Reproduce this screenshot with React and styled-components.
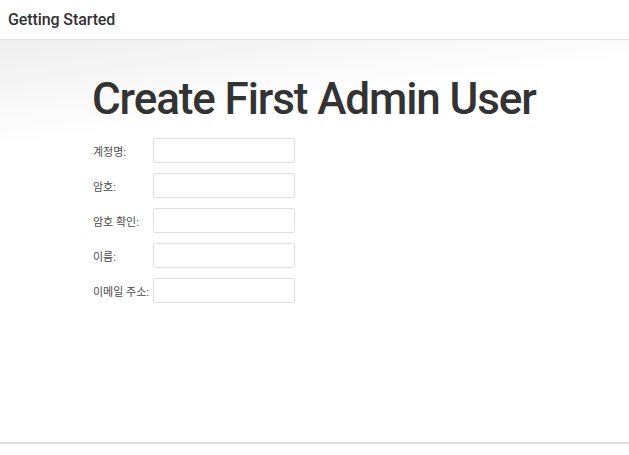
import React from 'react'
import styled, { createGlobalStyle } from 'styled-components'

const Global = createGlobalStyle`
  html, body { margin: 0; padding: 0; background: #fff; }
  body { font-family: Roboto, "Noto Sans CJK KR", sans-serif; color: #333; }
`

const Page = styled.div`
  width: 629px;
  height: 455px;
  display: flex;
  flex-direction: column;
  overflow: hidden;
`

const Header = styled.div`
  height: 40px;
  border-bottom: 1px solid #e4e4e4;
  display: flex;
  align-items: center;
  padding: 0 8px;
  box-sizing: border-box;
  font-size: 16px;
  font-weight: 500;
  letter-spacing: -0.1px;
  color: #333;
`

const Main = styled.div`
  height: 404px;
  box-sizing: border-box;
  border-bottom: 2px solid #dedede;
  background: linear-gradient(172deg, #efefef 0%, #f6f6f6 10%, #fff 22%);
  padding: 33px 0 0 92px;
`

const Title = styled.h1`
  margin: 0 0 13px;
  font-size: 44px;
  font-weight: 500;
  line-height: 52px;
  color: #333;
  letter-spacing: -1.1px;
`

const Form = styled.div`
  display: flex;
  flex-direction: column;
  gap: 10px;
`

const Row = styled.div`
  display: flex;
  align-items: center;
`

const Label = styled.label`
  width: 60px;
  padding-left: 1px;
  font-size: 11px;
  color: #4a4a4a;
  white-space: nowrap;
`

const Input = styled.input`
  width: 142px;
  height: 25px;
  box-sizing: border-box;
  border: 1px solid #e0e0e0;
  border-radius: 2px;
  background: #fff;
  outline: none;
`

const fields = ['계정명:', '암호:', '암호 확인:', '이름:', '이메일 주소:']

export default function App() {
  return (
    <Page>
      <Global />
      <Header>Getting Started</Header>
      <Main>
        <Title>Create First Admin User</Title>
        <Form>
          {fields.map((f) => (
            <Row key={f}>
              <Label>{f}</Label>
              <Input type={f.startsWith('암호') ? 'password' : 'text'} />
            </Row>
          ))}
        </Form>
      </Main>
    </Page>
  )
}
